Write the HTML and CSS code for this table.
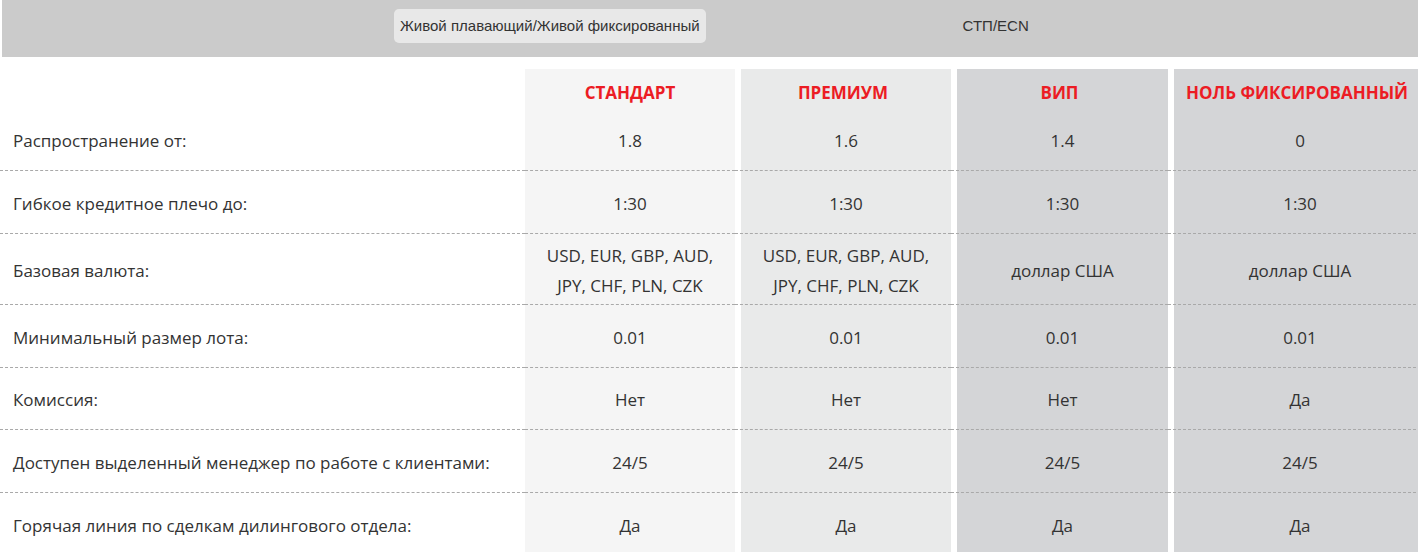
FILE: index.html
```html
<!DOCTYPE html>
<html lang="ru">
<head>
<meta charset="utf-8">
<title>Типы счетов</title>
<link rel="stylesheet" href="styles.css">
</head>
<body>
<div class="page">
  <div class="tabs">
    <div class="tab tab-active">Живой плавающий/Живой фиксированный</div>
    <div class="tab">СТП/ECN</div>
  </div>
  <div class="table">
    <div class="row row-head">
      <div class="cell label"></div>
      <div class="cell c-std"><span class="title">СТАНДАРТ</span></div>
      <div class="cell c-prem"><span class="title">ПРЕМИУМ</span></div>
      <div class="cell c-vip"><span class="title">ВИП</span></div>
      <div class="cell c-zero"><span class="title">НОЛЬ ФИКСИРОВАННЫЙ</span></div>
    </div>
    <div class="row">
      <div class="cell label">Распространение от:</div>
      <div class="cell c-std">1.8</div>
      <div class="cell c-prem">1.6</div>
      <div class="cell c-vip">1.4</div>
      <div class="cell c-zero">0</div>
    </div>
    <div class="row">
      <div class="cell label">Гибкое кредитное плечо до:</div>
      <div class="cell c-std">1:30</div>
      <div class="cell c-prem">1:30</div>
      <div class="cell c-vip">1:30</div>
      <div class="cell c-zero">1:30</div>
    </div>
    <div class="row">
      <div class="cell label">Базовая валюта:</div>
      <div class="cell c-std">USD, EUR, GBP, AUD,<br>JPY, CHF, PLN, CZK</div>
      <div class="cell c-prem">USD, EUR, GBP, AUD,<br>JPY, CHF, PLN, CZK</div>
      <div class="cell c-vip">доллар США</div>
      <div class="cell c-zero">доллар США</div>
    </div>
    <div class="row">
      <div class="cell label">Минимальный размер лота:</div>
      <div class="cell c-std">0.01</div>
      <div class="cell c-prem">0.01</div>
      <div class="cell c-vip">0.01</div>
      <div class="cell c-zero">0.01</div>
    </div>
    <div class="row">
      <div class="cell label">Комиссия:</div>
      <div class="cell c-std">Нет</div>
      <div class="cell c-prem">Нет</div>
      <div class="cell c-vip">Нет</div>
      <div class="cell c-zero">Да</div>
    </div>
    <div class="row">
      <div class="cell label">Доступен выделенный менеджер по работе с клиентами:</div>
      <div class="cell c-std">24/5</div>
      <div class="cell c-prem">24/5</div>
      <div class="cell c-vip">24/5</div>
      <div class="cell c-zero">24/5</div>
    </div>
    <div class="row">
      <div class="cell label">Горячая линия по сделкам дилингового отдела:</div>
      <div class="cell c-std">Да</div>
      <div class="cell c-prem">Да</div>
      <div class="cell c-vip">Да</div>
      <div class="cell c-zero">Да</div>
    </div>
  </div>
</div>
</body>
</html>
```

FILE: styles.css
```css
html, body {
  margin: 0;
  padding: 0;
  background: #ffffff;
}

.page {
  width: 1418px;
  overflow: hidden;
  font-family: "Open Sans", "Noto Sans", sans-serif;
  color: #333333;
}

.tabs {
  margin-left: 2px;
  height: 57px;
  background: #cbcbcb;
  display: flex;
  align-items: flex-start;
  padding: 9px 0 0 392px;
  box-sizing: border-box;
  gap: 251px;
  font-family: "Liberation Sans", Arial, sans-serif;
  font-size: 15px;
  color: #333333;
}

.tab {
  padding: 7px 6px;
  line-height: 20px;
  border-radius: 5px;
  white-space: nowrap;
}

.tab-active {
  background: #e8e8e8;
}

.table {
  margin-top: 12px;
  width: 1426px;
}

.row {
  display: grid;
  grid-template-columns: 525px 210px 216px 217px 258px;
}

.cell {
  box-sizing: border-box;
  min-height: 62.7px;
  padding: 7px 15px 3px;
  line-height: 30px;
  font-size: 17px;
  border-bottom: 1px dashed #a9a9a9;
  display: flex;
  align-items: center;
  justify-content: center;
  text-align: center;
}

.row-head .cell {
  min-height: 39.5px;
  padding: 8px 0 0;
  border-bottom: none;
}

.label {
  justify-content: flex-start;
  text-align: left;
  padding-left: 13px;
}

.c-std {
  background: #f5f5f5;
}

.c-prem {
  background: linear-gradient(to right, #ffffff 6px, #e9eaea 6px);
  padding-left: 21px;
}

.c-vip,
.c-zero {
  background: linear-gradient(to right, #ffffff 6px, #d4d5d7 6px);
  padding-left: 21px;
}

.title {
  color: #ec1c24;
  font-weight: 700;
  font-size: 17px;
  white-space: nowrap;
}
```
